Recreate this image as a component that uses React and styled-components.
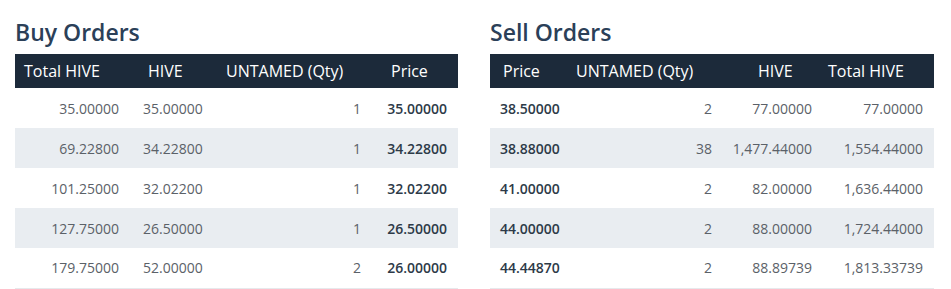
import React from "react";
import styled, { createGlobalStyle } from "styled-components";

const GlobalStyle = createGlobalStyle`
  body {
    margin: 0;
    background: #fff;
    font-family: "Open Sans", "Noto Sans", sans-serif;
  }
`;

const StPage = styled.div`
  display: flex;
  gap: 32px;
  padding: 0 15px;
`;

const StPanel = styled.section`
  width: ${(p) => p.$width}px;
`;

const StTitle = styled.h2`
  margin: 0;
  padding-top: 15px;
  height: 54px;
  box-sizing: border-box;
  font-size: 23px;
  line-height: 34px;
  font-weight: 600;
  color: #2b4058;
`;

const StTable = styled.table`
  width: 100%;
  border-collapse: collapse;
  table-layout: fixed;
  border-bottom: 1px solid #e6e9ec;
`;

const StHeadRow = styled.tr`
  background: #1c2a3a;
  height: 34px;
`;

const StHeadCell = styled.th`
  padding: 0 0 0 ${(p) => p.$pad}px;
  text-align: left;
  font-size: 16px;
  font-weight: 400;
  color: #fff;
  white-space: nowrap;
`;

const StRow = styled.tr`
  height: 40px;
  background: ${(p) => (p.$striped ? "#e9edf1" : "#fff")};
`;

const StCell = styled.td`
  padding: ${(p) => (p.$align === "right" ? `0 ${p.$pad}px 0 0` : `0 0 0 ${p.$pad}px`)};
  text-align: ${(p) => p.$align};
  font-size: 14px;
  font-weight: ${(p) => (p.$bold ? 600 : 400)};
  color: ${(p) => (p.$bold ? "#2d3a48" : "#5b6168")};
  white-space: nowrap;
`;

const buyCols = [
  { title: "Total HIVE", width: 113, headPad: 9, align: "right", pad: 9 },
  { title: "HIVE", width: 88, headPad: 20, align: "left", pad: 15 },
  { title: "UNTAMED (Qty)", width: 154, headPad: 10, align: "right", pad: 9 },
  { title: "Price", width: 88, headPad: 21, align: "right", pad: 11, bold: true },
];

const sellCols = [
  { title: "Price", width: 76, headPad: 13, align: "left", pad: 10, bold: true },
  { title: "UNTAMED (Qty)", width: 154, headPad: 10, align: "right", pad: 8 },
  { title: "HIVE", width: 98, headPad: 38, align: "right", pad: 6 },
  { title: "Total HIVE", width: 116, headPad: 10, align: "right", pad: 11 },
];

const buyOrders = [
  ["35.00000", "35.00000", "1", "35.00000"],
  ["69.22800", "34.22800", "1", "34.22800"],
  ["101.25000", "32.02200", "1", "32.02200"],
  ["127.75000", "26.50000", "1", "26.50000"],
  ["179.75000", "52.00000", "2", "26.00000"],
];

const sellOrders = [
  ["38.50000", "2", "77.00000", "77.00000"],
  ["38.88000", "38", "1,477.44000", "1,554.44000"],
  ["41.00000", "2", "82.00000", "1,636.44000"],
  ["44.00000", "2", "88.00000", "1,724.44000"],
  ["44.44870", "2", "88.89739", "1,813.33739"],
];

function OrderTable({ title, width, cols, rows }) {
  return (
    <StPanel $width={width}>
      <StTitle>{title}</StTitle>
      <StTable>
        <colgroup>
          {cols.map((col) => (
            <col key={col.title} style={{ width: col.width }} />
          ))}
        </colgroup>
        <thead>
          <StHeadRow>
            {cols.map((col) => (
              <StHeadCell key={col.title} $pad={col.headPad}>
                {col.title}
              </StHeadCell>
            ))}
          </StHeadRow>
        </thead>
        <tbody>
          {rows.map((row, i) => (
            <StRow key={i} $striped={i % 2 === 1}>
              {row.map((value, j) => (
                <StCell
                  key={j}
                  $align={cols[j].align}
                  $pad={cols[j].pad}
                  $bold={cols[j].bold}
                >
                  {value}
                </StCell>
              ))}
            </StRow>
          ))}
        </tbody>
      </StTable>
    </StPanel>
  );
}

function App() {
  return (
    <>
      <GlobalStyle />
      <StPage>
        <OrderTable title="Buy Orders" width={443} cols={buyCols} rows={buyOrders} />
        <OrderTable title="Sell Orders" width={444} cols={sellCols} rows={sellOrders} />
      </StPage>
    </>
  );
}

export default App;
